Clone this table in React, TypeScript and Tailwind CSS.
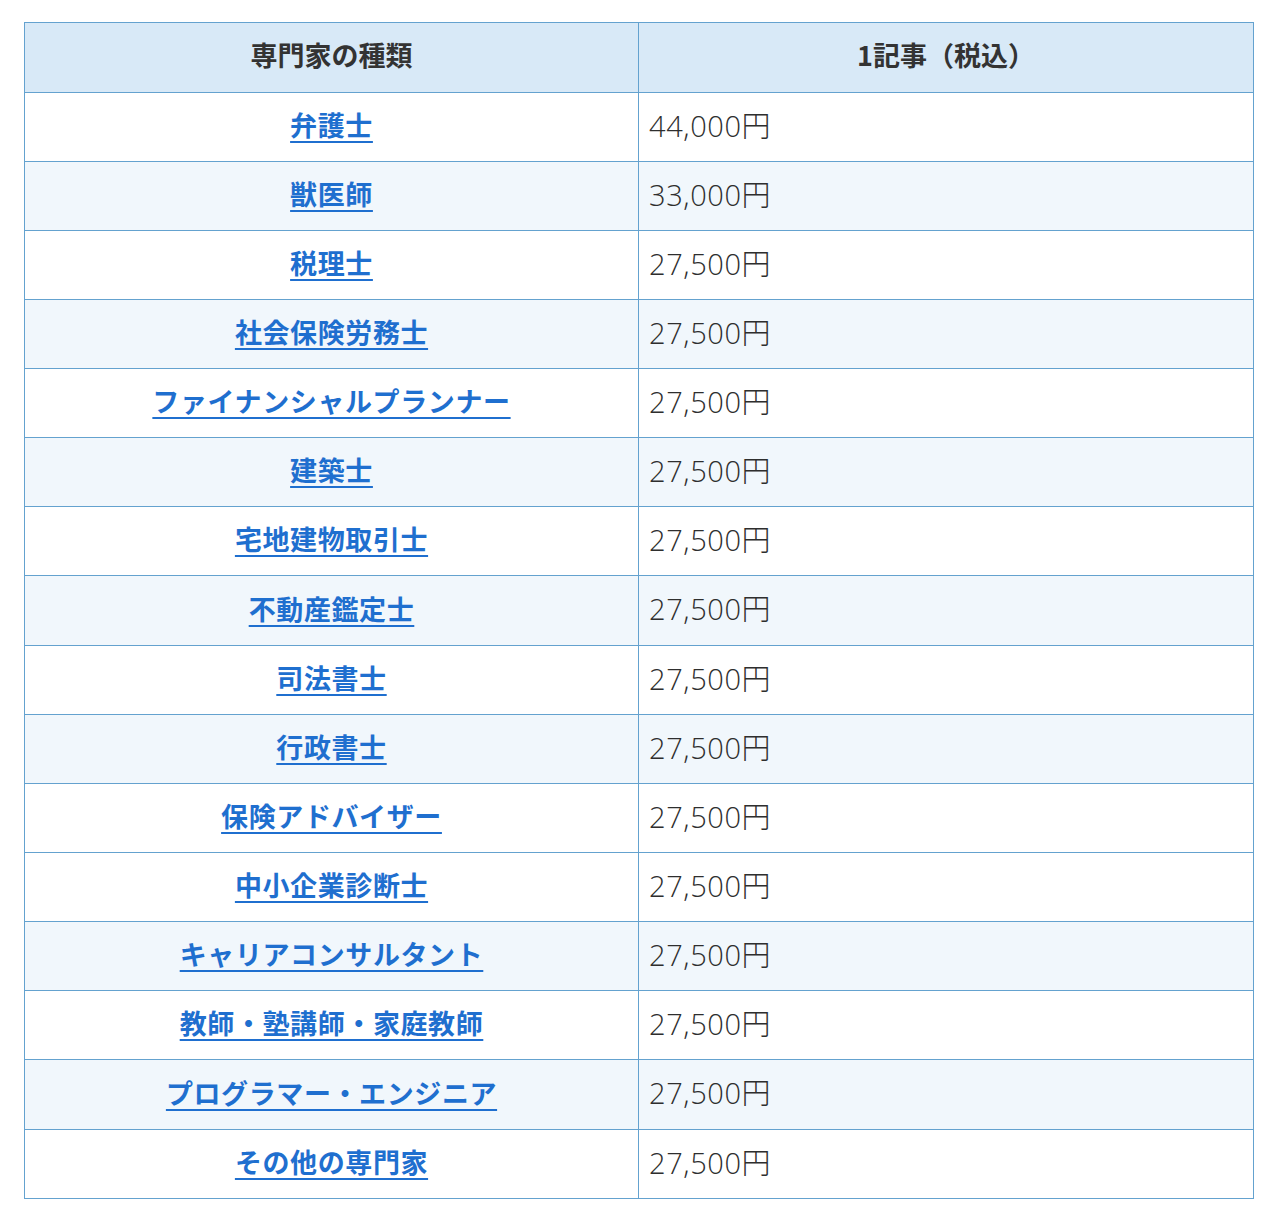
const rows = [
  { name: "弁護士", price: "44,000円" },
  { name: "獣医師", price: "33,000円", shaded: true },
  { name: "税理士", price: "27,500円" },
  { name: "社会保険労務士", price: "27,500円", shaded: true },
  { name: "ファイナンシャルプランナー", price: "27,500円" },
  { name: "建築士", price: "27,500円", shaded: true },
  { name: "宅地建物取引士", price: "27,500円" },
  { name: "不動産鑑定士", price: "27,500円", shaded: true, tall: true },
  { name: "司法書士", price: "27,500円" },
  { name: "行政書士", price: "27,500円", shaded: true },
  { name: "保険アドバイザー", price: "27,500円" },
  { name: "中小企業診断士", price: "27,500円" },
  { name: "キャリアコンサルタント", price: "27,500円", shaded: true },
  { name: "教師・塾講師・家庭教師", price: "27,500円" },
  { name: "プログラマー・エンジニア", price: "27,500円", shaded: true, tall: true },
  { name: "その他の専門家", price: "27,500円" },
];

const App = () => {
  return (
    <div className="bg-white min-h-[1219px] pt-[22px] pl-[24px] pr-[26px] font-['Noto_Sans_CJK_JP',sans-serif]">
      <div className="border-l border-r border-b border-[#64a2cf]">
        <div className="grid grid-cols-2 h-[70px] border-t border-[#64a2cf] bg-[#d8e9f7] text-[27px] font-bold text-[#333]">
          <div className="flex items-center justify-center pb-[4px] border-r border-[#64a2cf]">
            専門家の種類
          </div>
          <div className="flex items-center justify-center pb-[4px]">1記事（税込）</div>
        </div>
        {rows.map((row) => (
          <div
            key={row.name}
            className={`grid grid-cols-2 border-t border-[#64a2cf] ${
              row.tall ? "h-[70px]" : "h-[69px]"
            } ${row.shaded ? "bg-[#f1f7fc]" : "bg-white"}`}
          >
            <div className="flex items-center justify-center pb-[3px] border-r border-[#64a2cf]">
              <a
                href="#"
                className="text-[27px] font-bold text-[#1f6fcf] underline decoration-2 underline-offset-[5px] tracking-[0.6px]"
              >
                {row.name}
              </a>
            </div>
            <div className="flex items-center pl-[10px] pb-[3px] text-[29px] font-light text-[#2e2e2e] font-['Open_Sans','Noto_Sans_CJK_JP',sans-serif] tracking-[0.6px]">
              {row.price}
            </div>
          </div>
        ))}
      </div>
    </div>
  );
};

export default App;
